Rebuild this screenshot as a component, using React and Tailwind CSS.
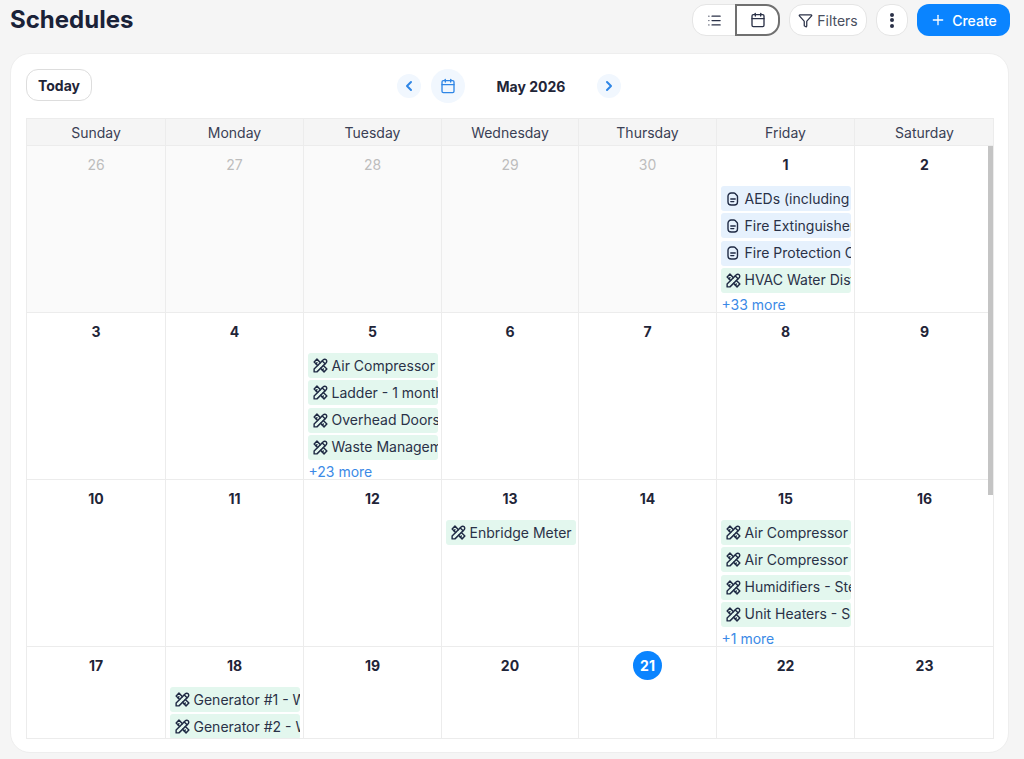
import React from "react";
import { List, Calendar, Funnel, Plus, ChevronLeft, ChevronRight } from "lucide-react";
import { TbTools } from "react-icons/tb";

const DAYS = ["Sunday", "Monday", "Tuesday", "Wednesday", "Thursday", "Friday", "Saturday"];

function DocIcon() {
  return (
    <svg width="16" height="16" viewBox="0 0 16 16" fill="none" stroke="#1f2a44" strokeWidth="1.4" strokeLinecap="round" strokeLinejoin="round" className="shrink-0">
      <path d="M6.2 2h2.6c.5 0 1 .2 1.3.5l1.9 1.9c.3.3.5.8.5 1.3v5.1a3.2 3.2 0 0 1-3.2 3.2H6.2A3.2 3.2 0 0 1 3 10.8V5.2A3.2 3.2 0 0 1 6.2 2Z" />
      <path d="M5.8 8h4.4M5.8 10.6h3" />
    </svg>
  );
}

function Chip({ label, kind }) {
  const doc = kind === "doc";
  return (
    <div className={`flex h-[25px] w-[130px] shrink-0 items-center overflow-hidden whitespace-nowrap rounded-[3px] pl-[4px] text-[14px] leading-none text-[#2a3147] ${doc ? "bg-[#e6f1fd]" : "bg-[#e3f7ee]"}`}>
      <span className="flex w-[20px] shrink-0 items-center">
        {doc ? <DocIcon /> : <TbTools size={17} color="#1f2a44" className="shrink-0" />}
      </span>
      <span>{label}</span>
    </div>
  );
}

function Cell({ day, muted, today, events, more, last }) {
  return (
    <div className={`h-[167px] border-b border-[#ececec] ${last ? "" : "border-r"} ${muted ? "bg-[#fafafa]" : "bg-white"}`}>
      <div className="flex h-[36px] items-center justify-center">
        {today ? (
          <span className="flex h-[29px] w-[29px] items-center justify-center rounded-full bg-[#0a84ff] text-[14px] font-bold text-white">{day}</span>
        ) : (
          <span className={`text-[14px] ${muted ? "font-normal text-[#bdbdbd]" : "font-bold text-[#1f2538]"}`}>{day}</span>
        )}
      </div>
      {events && (
        <div className="mt-[4px] flex flex-col gap-[2.3px] pl-[3.5px]">
          {events.map((e) => (
            <Chip key={e[0]} label={e[0]} kind={e[1]} />
          ))}
          {more && <div className="pl-[1px] text-[14px] leading-[20px] text-[#3b8ae6]">{more}</div>}
        </div>
      )}
    </div>
  );
}

const rows = [
  [
    { day: 26, muted: true }, { day: 27, muted: true }, { day: 28, muted: true }, { day: 29, muted: true }, { day: 30, muted: true },
    { day: 1, more: "+33 more", events: [["AEDs (including batteries)", "doc"], ["Fire Extinguishers - Monthly", "doc"], ["Fire Protection Checks", "doc"], ["HVAC Water Distribution", "tool"]] },
    { day: 2 },
  ],
  [
    { day: 3 }, { day: 4 },
    { day: 5, more: "+23 more", events: [["Air Compressor - Weekly", "tool"], ["Ladder - 1 month check", "tool"], ["Overhead Doors - Monthly", "tool"], ["Waste Management", "tool"]] },
    { day: 6 }, { day: 7 }, { day: 8 }, { day: 9 },
  ],
  [
    { day: 10 }, { day: 11 }, { day: 12 },
    { day: 13, events: [["Enbridge Meter Reading", "tool"]] },
    { day: 14 },
    { day: 15, more: "+1 more", events: [["Air Compressor - Filter", "tool"], ["Air Compressor - Oil", "tool"], ["Humidifiers - Steam", "tool"], ["Unit Heaters - Summer", "tool"]] },
    { day: 16 },
  ],
  [
    { day: 17 },
    { day: 18, events: [["Generator #1 - Weekly", "tool"], ["Generator #2 - Weekly", "tool"]] },
    { day: 19 }, { day: 20 }, { day: 21, today: true }, { day: 22 }, { day: 23 },
  ],
];

const COLS = "grid grid-cols-[139px_138px_138px_137px_138px_138px_139px]";

export default function App() {
  return (
    <div className="h-[759px] w-[1024px] overflow-hidden bg-[#f5f5f5] font-['Inter',sans-serif] text-[#1f2538]">
      <header className="flex h-[53px] items-start justify-between pl-[10px] pr-[14px] pt-[4px]">
        <h1 className="text-[24px] font-bold leading-[32px] text-[#1a2238]">Schedules</h1>
        <div className="flex items-center">
          <div className="flex h-[32px] w-[88px] rounded-[14px] border border-[#e5e5e5] bg-white">
            <button className="flex w-[44px] items-center justify-center"><List size={15} color="#2a3147" /></button>
            <button className="-m-px flex w-[45px] items-center justify-center rounded-r-[14px] border-2 border-[#707070]"><Calendar size={16} color="#2a3147" /></button>
          </div>
          <button className="ml-[9px] flex h-[32px] w-[78px] items-center justify-center gap-[4px] rounded-[14px] border border-[#e5e5e5] bg-white text-[14px] text-[#4a5060]"><Funnel size={15} color="#2a3147" />Filters</button>
          <button className="ml-[9px] flex h-[32px] w-[32px] flex-col items-center justify-center gap-[1.5px] rounded-[14px] border border-[#e5e5e5] bg-white">
            <span className="h-[4px] w-[4px] rounded-full bg-[#2a3147]" />
            <span className="h-[4px] w-[4px] rounded-full bg-[#2a3147]" />
            <span className="h-[4px] w-[4px] rounded-full bg-[#2a3147]" />
          </button>
          <button className="ml-[9px] flex h-[32px] w-[93px] items-center justify-center gap-[6px] rounded-[12px] bg-[#0a84ff] text-[14px] font-medium text-white"><Plus size={16} />Create</button>
        </div>
      </header>

      <main className="ml-[10px] h-[700px] w-[999px] rounded-[20px] border border-[#eeeeee] bg-white px-[15px] pt-[15px]">
        <div className="relative flex h-[34px] items-center justify-center">
          <button className="absolute left-0 top-0 flex h-[32px] w-[66px] items-center justify-center rounded-[12px] border border-[#dddddd] bg-white text-[14px] font-bold text-[#1f2538]">Today</button>
          <div className="flex items-center pr-[1px]">
            <button className="flex h-[24px] w-[24px] items-center justify-center rounded-full bg-[#f1f7fe]"><ChevronLeft size={16} strokeWidth={3} color="#2f86e6" /></button>
            <button className="ml-[10px] flex h-[34px] w-[34px] items-center justify-center rounded-full bg-[#f1f7fe]"><Calendar size={16} color="#2f86e6" /></button>
            <span className="w-[132px] text-center text-[14px] font-bold text-[#1f2538]">May 2026</span>
            <button className="flex h-[24px] w-[24px] items-center justify-center rounded-full bg-[#f1f7fe]"><ChevronRight size={16} strokeWidth={3} color="#2f86e6" /></button>
          </div>
        </div>

        <div className="relative mt-[15px] h-[621px] w-[968px] overflow-hidden border-b border-l border-r border-t border-[#ececec]">
          <div className={`${COLS} h-[27px] border-b border-[#ececec] pr-[5px]`}>
            {DAYS.map((d, i) => (
              <div key={d} className={`flex items-center justify-center bg-[#f5f5f5] text-[14px] text-[#3a4054] ${i < 6 ? "border-r border-[#ececec]" : ""}`}>{d}</div>
            ))}
          </div>
          {rows.map((r, i) => (
            <div key={i} className={COLS}>
              {r.map((c, j) => (
                <Cell key={c.day} {...c} last={j === 6} />
              ))}
            </div>
          ))}
          <div className="absolute right-0 top-[27px] h-[349px] w-[5px] bg-[#c4c4c4]" />
        </div>
      </main>
    </div>
  );
}
